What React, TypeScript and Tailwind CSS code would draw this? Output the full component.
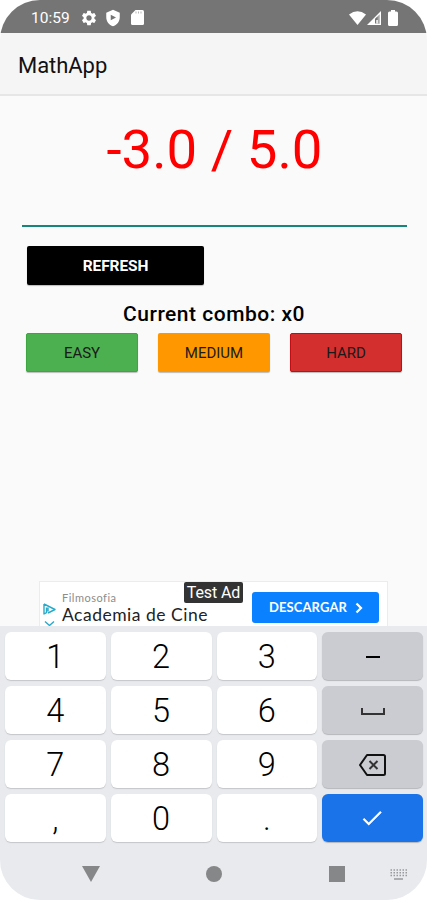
import React from "react";
import { MdSettings, MdCheck } from "react-icons/md";

const keyBase =
  "flex items-center justify-center h-12 rounded-[6px] text-black";
const lightKey = "bg-white text-[32.5px] font-light shadow-[0_1px_1px_#c4c6c9]";
const greyKey = "bg-[#cbccd1] shadow-[0_1px_1px_#b4b6ba]";

const Key = ({ label }: { label: string }) => (
  <button className={`${keyBase} ${lightKey}`}>
    <span className="leading-none relative top-px">{label}</span>
  </button>
);

const StatusBar = () => (
  <div className="h-[33px] shrink-0 bg-[#757575] text-white flex items-center pl-[31px] pr-[29px] pt-[2px]">
    <span className="text-[15.5px] leading-none w-[49px] relative top-px">10:59</span>
    <MdSettings className="w-[18px] h-[18px]" />
    {/* shield */}
    <svg viewBox="0 0 24 24" className="w-[18px] h-[18px] ml-[6px]">
      <path
        fill="#fff"
        fillRule="evenodd"
        d="M12 1 3 5v6c0 5.6 3.8 10.700 9 12 5.200-1.300 9-6.400 9-12V5zM9 7.500v7.500l7-3.750z"
      />
    </svg>
    <svg viewBox="0 0 13 15" className="w-[13px] h-[15px] ml-[9px]">
      <path
        fill="#fff"
        d="M4.500 0H11.500Q13 0 13 1.500V13.500Q13 15 11.500 15H1.500Q0 15 0 13.500V4.500z"
      />
      <path stroke="#a5a5a5" strokeWidth="0.8" d="M5 1.500v2M7.500 1.500v2M10 1.500v2" />
    </svg>
    <div className="ml-auto flex items-center">
      <svg viewBox="0 0 17 14" className="w-[17px] h-[14px]">
        <path fill="#fff" d="M0 3.500Q8.500-3 17 3.500L8.500 14z" />
      </svg>
      <svg viewBox="0 0 14 14" className="w-[14px] h-[14px] ml-px">
        <path fill="#fff" d="M14 0V14H0z" />
        <path fill="#a5a5a5" d="M12.700 3.300V12.700H8V8z" />
        <path fill="#757575" d="M8 8l2.500-2.500V12H8z" />
        <path fill="#fff" d="M9.300 9h1.500v3.500H9.300z" />
      </svg>
      <svg viewBox="0 0 10 16" className="w-[10px] h-[16px] ml-[7px]">
        <path
          fill="#fff"
          d="M3 0h4v1.500h1.500Q10 1.500 10 3V14.500Q10 16 8.500 16h-7Q0 16 0 14.500V3Q0 1.500 1.500 1.500H3z"
        />
      </svg>
    </div>
  </div>
);

const Ad = () => (
  <div className="ml-[39px] w-[349px] h-[45px] bg-white border border-b-0 border-[#ececec] flex relative overflow-hidden">
    {/* ad choices */}
    <svg viewBox="0 0 14 26" fill="none" className="w-[14px] h-[26px] mt-[20px] ml-[3px] shrink-0">
      <path stroke="#2ba9c9" strokeWidth="1.4" strokeLinejoin="round" d="M1 2v10l2.500-1.300V5.500M1 2l11 5.500-7 3.500M5 5.500v4" />
      <path stroke="#2ba9c9" strokeWidth="1.4" d="M2 19.500l4.500 4 4.500-4" />
    </svg>
    <div className="ml-[5px] mt-[9px] font-['Lato',sans-serif] whitespace-nowrap">
      <p className="text-[11px] leading-[13px] tracking-[0.5px] text-[#8c8c8c]">Filmosofia</p>
      <p className="text-[17.5px] leading-[21px] tracking-[0.5px] text-[#222]">Academia de Cine</p>
    </div>
    <span className="absolute left-[144px] top-0 h-[21px] w-[59px] bg-[#333] rounded-[2px] text-white text-[16px] tracking-[-0.1px] leading-[22px] text-center whitespace-nowrap">
      Test Ad
    </span>
    <button className="absolute left-[212px] top-[10px] w-[127px] h-[31px] bg-[#0a82ff] rounded-[3px] text-white flex items-center pl-[17px] font-['Lato',sans-serif] font-bold text-[13px]">
      <span className="tracking-[0.1px]">DESCARGAR</span>
      <svg viewBox="0 0 8 12" fill="none" className="w-[8px] h-[12px] ml-[8px]">
        <path stroke="#fff" strokeWidth="2.2" d="M1.500 1.500L6 6l-4.500 4.500" />
      </svg>
    </button>
  </div>
);

const Keyboard = () => (
  <div className="h-[274px] shrink-0 bg-[#e8eaed] pt-[6px]">
    <div className="grid grid-cols-4 gap-x-[5px] gap-y-[6px] px-[5px] pr-[4px]">
      <Key label="1" />
      <Key label="2" />
      <Key label="3" />
      <button className={`${keyBase} ${greyKey}`}>
        <span className="w-[14px] h-[2px] bg-black relative top-px" />
      </button>
      <Key label="4" />
      <Key label="5" />
      <Key label="6" />
      <button className={`${keyBase} ${greyKey}`}>
        <span className="w-[24px] h-[7px] border-2 border-t-0 border-[#333] relative top-px" />
      </button>
      <Key label="7" />
      <Key label="8" />
      <Key label="9" />
      <button className={`${keyBase} ${greyKey}`}>
        <svg viewBox="0 0 27 22" fill="none" className="w-[27px] h-[22px] relative top-px">
          <path
            stroke="#111"
            strokeWidth="2"
            strokeLinejoin="round"
            d="M8 1H24.500Q26 1 26 2.500V19.500Q26 21 24.500 21H8L1 11z"
          />
          <path stroke="#333" strokeWidth="2" d="M10.500 7l8 8M18.500 7l-8 8" />
        </svg>
      </button>
      <Key label="," />
      <Key label="0" />
      <Key label="." />
      <button className={`${keyBase} bg-[#1a73e8] shadow-[0_1px_1px_#b4b6ba]`}>
        <MdCheck className="w-[26px] h-[26px] text-white relative -left-px" />
      </button>
    </div>

    {/* navigation bar */}
    <div className="flex items-center h-[64px] pl-[82px] pr-[20px]">
      <svg viewBox="0 0 18 16" className="w-[18px] h-[16px]">
        <path fill="#868788" d="M0 0h18L9 16z" />
      </svg>
      <span className="w-[16px] h-[16px] rounded-full bg-[#868788] ml-[106px]" />
      <span className="w-[16px] h-[16px] bg-[#868788] ml-[107px]" />
      <svg viewBox="0 0 17 11" className="w-[17px] h-[11px] ml-auto">
        <path
          stroke="#98999b"
          strokeWidth="1.5"
          strokeDasharray="1.5 1.500"
          d="M0.500 1h16.500M0.500 3.800h16.500M0.500 6.600h16.500"
        />
        <path stroke="#98999b" strokeWidth="1.5" d="M4 10h9" />
      </svg>
    </div>
  </div>
);

const App = () => {
  return (
    <div className="bg-white w-[427px] h-[900px] font-['Roboto',sans-serif]">
      <div className="w-full h-full rounded-[40px] overflow-hidden bg-[#fafafa] flex flex-col">
        <StatusBar />
        <div className="h-[63px] shrink-0 bg-[#f5f5f5] border-b-2 border-[#e6e6e6] flex items-center pl-[18px] pt-[3px]">
          <h1 className="text-[22px] tracking-[-0.05px] text-[#111]">MathApp</h1>
        </div>

        <div className="flex-grow flex flex-col pl-[22px] pr-[20px]">
          <p className="text-[54.5px] leading-[64px] mt-[21px] text-center text-[#ff0000] whitespace-nowrap">
            -3.0 / 5.0
          </p>
          <div className="h-[46px] border-b-2 border-[#15857d]" />

          <div className="pl-[4px] pr-[5px]">
            <button className="block mt-[19px] ml-px pt-[3px] w-[177px] h-[39px] bg-black rounded-[2px] text-white text-[15.5px] font-bold tracking-[-0.1px] shadow-[0_1px_1px_#bbb]">
              REFRESH
            </button>
            <p className="mt-[16px] h-[26px] leading-[26px] text-[21px] font-medium text-center text-black tracking-[0.5px]">
              Current combo: x0
            </p>
            <div className="grid grid-cols-3 gap-[20px] mt-[6px] text-[15px] text-[#1a1a1a]">
              <button className="h-[39px] pt-px rounded-[2px] bg-[#4caf50] border border-[#3da542] shadow-[0_1px_1px_#bbb]">
                EASY
              </button>
              <button className="h-[39px] pt-[2px] rounded-[2px] bg-[#ff9800] shadow-[0_1px_1px_#bbb]">
                MEDIUM
              </button>
              <button className="h-[39px] pt-px rounded-[2px] bg-[#d32f2f] border border-[#c40d12] shadow-[0_1px_1px_#bbb]">
                HARD
              </button>
            </div>
          </div>
        </div>

        <Ad />
        <Keyboard />
      </div>
    </div>
  );
};

export default App;
